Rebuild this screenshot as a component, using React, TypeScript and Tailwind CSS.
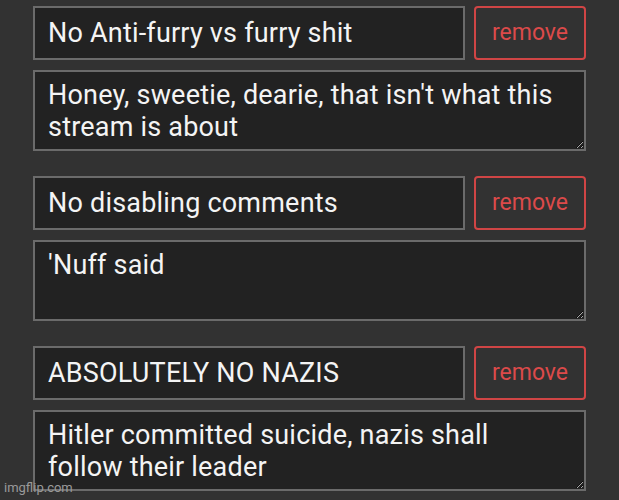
const rules = [
  {
    title: "No Anti-furry vs furry shit",
    body: "Honey, sweetie, dearie, that isn't what this stream is about",
  },
  { title: "No disabling comments", body: "'Nuff said" },
  {
    title: "ABSOLUTELY NO NAZIS",
    body: "Hitler committed suicide, nazis shall follow their leader",
  },
];

export default function App() {
  return (
    <div className="relative h-[500px] w-[619px] overflow-hidden bg-[#323232] pl-[33px] pt-[6px] font-['Roboto',sans-serif]">
      <div className="flex flex-col gap-[25px]">
        {rules.map((r) => (
          <div key={r.title} className="flex flex-col gap-[10px]">
            <div className="flex gap-[9px]">
              <input
                readOnly
                value={r.title}
                className="h-[54px] w-[432px] border-2 border-[#6b6b6b] bg-[#222222] px-[13px] text-[27px] tracking-[0.2px] text-[#f4f4f4] outline-none"
              />
              <button
                type="button"
                className="h-[54px] w-[112px] rounded-[4px] border-2 border-[#d04545] bg-transparent pt-[1px] text-[23px] text-[#dc4a4a]"
              >
                remove
              </button>
            </div>
            <textarea
              readOnly
              value={r.body}
              className="block h-[81px] w-[553px] resize-y border-2 border-[#6b6b6b] bg-[#222222] pl-[13px] pr-[18px] pt-[7px] text-[27px] leading-[32px] tracking-[0.2px] text-[#f4f4f4] outline-none"
            />
          </div>
        ))}
      </div>
      <span className="absolute bottom-[6px] left-[4px] text-[13px] leading-none text-[#9a9a9a]">
        imgflip.com
      </span>
    </div>
  );
}
